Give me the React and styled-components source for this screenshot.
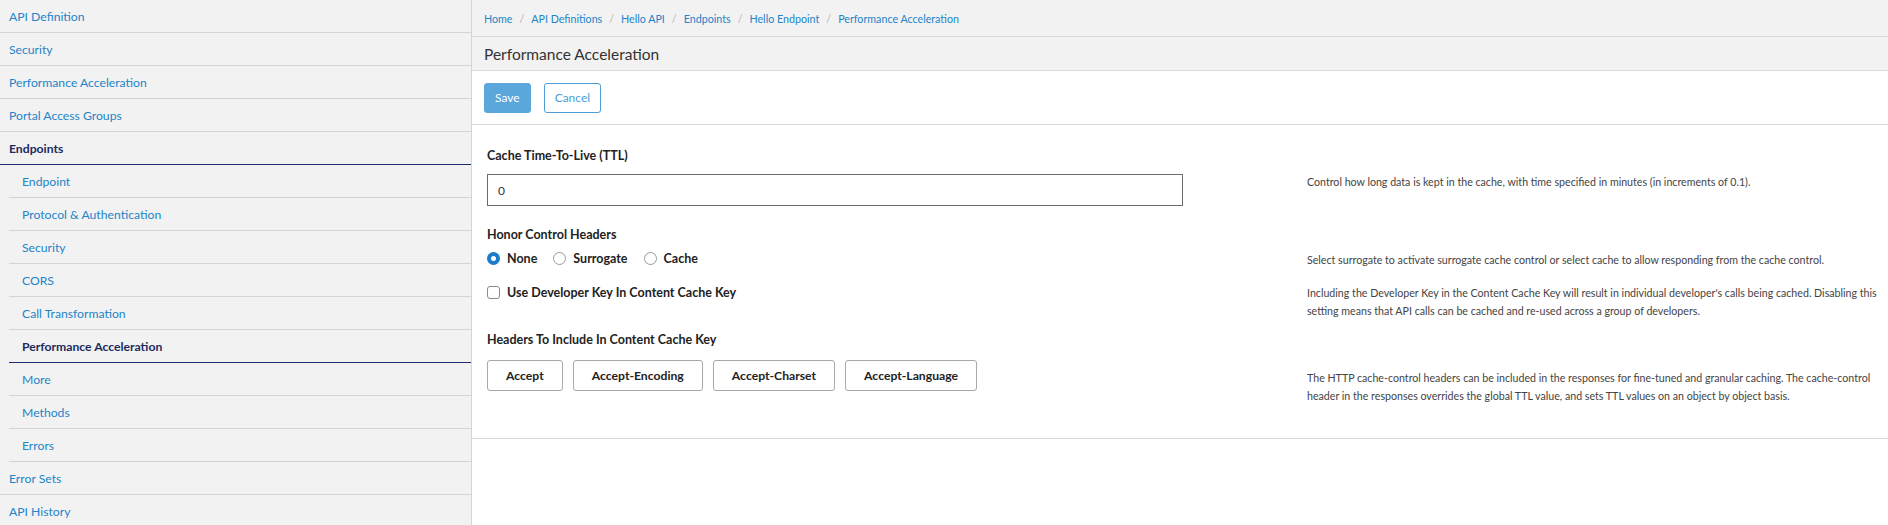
import React, { useState } from "react";
import styled, { createGlobalStyle } from "styled-components";

const GlobalStyle = createGlobalStyle`
  html, body {
    margin: 0;
    padding: 0;
    background: #fff;
  }
  body {
    font-family: Lato, "Noto Sans", Arial, sans-serif;
    color: #333;
  }
`;

const navTop = [
  { label: "API Definition" },
  { label: "Security" },
  { label: "Performance Acceleration" },
  { label: "Portal Access Groups" },
];

const navSub = [
  "Endpoint",
  "Protocol & Authentication",
  "Security",
  "CORS",
  "Call Transformation",
  "Performance Acceleration",
  "More",
  "Methods",
  "Errors",
];

const crumbs = [
  "Home",
  "API Definitions",
  "Hello API",
  "Endpoints",
  "Hello Endpoint",
  "Performance Acceleration",
];

const headerKeys = ["Accept", "Accept-Encoding", "Accept-Charset", "Accept-Language"];

const App = () => {
  const [honor, setHonor] = useState("none");
  const [devKey, setDevKey] = useState(false);
  const [ttl, setTtl] = useState("0");

  return (
    <Page>
      <GlobalStyle />
      <Sidebar>
        {navTop.map((item) => (
          <NavItem key={item.label}>{item.label}</NavItem>
        ))}
        <NavItem $active>Endpoints</NavItem>
        <SubNav>
          {navSub.map((label) => (
            <SubItem key={label} $active={label === "Performance Acceleration"}>
              {label}
            </SubItem>
          ))}
        </SubNav>
        <NavItem>Error Sets</NavItem>
        <NavItem>API History</NavItem>
      </Sidebar>

      <Main>
        <Breadcrumbs>
          {crumbs.map((c, i) => (
            <React.Fragment key={c}>
              {i > 0 && <Sep>/</Sep>}
              <Crumb>{c}</Crumb>
            </React.Fragment>
          ))}
        </Breadcrumbs>
        <TitleBar>Performance Acceleration</TitleBar>
        <Actions>
          <SaveBtn>Save</SaveBtn>
          <CancelBtn>Cancel</CancelBtn>
        </Actions>

        <Form>
          <Row $gap={20}>
            <Field>
              <Label $gap={10}>Cache Time-To-Live (TTL)</Label>
              <TextInput value={ttl} onChange={(e) => setTtl(e.target.value)} />
            </Field>
            <Help $top={26}>
              Control how long data is kept in the cache, with time specified in minutes (in increments of 0.1).
            </Help>
          </Row>

          <Row $gap={15}>
            <Field>
              <Label $gap={7}>Honor Control Headers</Label>
              <RadioGroup>
                {[
                  ["none", "None"],
                  ["surrogate", "Surrogate"],
                  ["cache", "Cache"],
                ].map(([val, text]) => (
                  <Option key={val} onClick={() => setHonor(val)}>
                    <Radio $checked={honor === val} />
                    {text}
                  </Option>
                ))}
              </RadioGroup>
            </Field>
            <Help $top={25}>
              Select surrogate to activate surrogate cache control or select cache to allow responding from the cache control.
            </Help>
          </Row>

          <Row $gap={11}>
            <Field>
              <Option onClick={() => setDevKey(!devKey)}>
                <Checkbox $checked={devKey} />
                Use Developer Key In Content Cache Key
              </Option>
            </Field>
            <Help $top={0}>
              Including the Developer Key in the Content Cache Key will result in individual developer's calls being cached. Disabling this setting means that API calls can be cached and re-used across a group of developers.
            </Help>
          </Row>

          <Row $gap={0}>
            <Field>
              <Label $gap={12}>Headers To Include In Content Cache Key</Label>
              <KeyButtons>
                {headerKeys.map((k) => (
                  <KeyButton key={k}>{k}</KeyButton>
                ))}
              </KeyButtons>
            </Field>
            <Help $top={38}>
              The HTTP cache-control headers can be included in the responses for fine-tuned and granular caching. The cache-control header in the responses overrides the global TTL value, and sets TTL values on an object by object basis.
            </Help>
          </Row>
        </Form>
      </Main>
    </Page>
  );
};

const Page = styled.div`
  display: flex;
  height: 100vh;
  overflow: hidden;
`;

const Sidebar = styled.nav`
  width: 471px;
  flex-shrink: 0;
  background: #f2f2f2;
  border-right: 1px solid #d6d6d6;
  display: flex;
  flex-direction: column;
`;

const NavItem = styled.div`
  height: 32px;
  flex-shrink: 0;
  display: flex;
  align-items: center;
  padding-left: 9px;
  font-size: 12.2px;
  font-weight: ${(p) => (p.$active ? 700 : 400)};
  color: ${(p) => (p.$active ? "#1c2b5e" : "#2284c9")};
  border-bottom: 1px solid ${(p) => (p.$active ? "#1c2b6e" : "#d4d4d4")};
`;

const SubNav = styled.div`
  margin-left: 9px;
  display: flex;
  flex-direction: column;
`;

const SubItem = styled(NavItem)`
  padding-left: 13px;
`;

const Main = styled.main`
  flex: 1;
  display: flex;
  flex-direction: column;
  min-width: 0;
`;

const Breadcrumbs = styled.div`
  height: 36px;
  background: #f2f2f2;
  border-bottom: 1px solid #d9d9d9;
  display: flex;
  align-items: center;
  padding-left: 12px;
  font-size: 10.7px;
`;

const Crumb = styled.span`
  color: #2284c9;
`;

const Sep = styled.span`
  color: #b5b5b5;
  margin: 0 7px;
`;

const TitleBar = styled.h1`
  margin: 0;
  height: 33px;
  background: #f2f2f2;
  border-bottom: 1px solid #d9d9d9;
  display: flex;
  align-items: center;
  padding-left: 12px;
  font-size: 15.5px;
  font-weight: 400;
  color: #333;
`;

const Actions = styled.div`
  height: 53px;
  border-bottom: 1px solid #d9d9d9;
  display: flex;
  align-items: center;
  gap: 13px;
  padding-left: 12px;
`;

const BaseBtn = styled.button`
  height: 30px;
  border-radius: 3px;
  font-family: inherit;
  font-size: 12px;
  padding: 0 10px;
  cursor: pointer;
`;

const SaveBtn = styled(BaseBtn)`
  min-width: 45px;
  background: #5ba7db;
  border: 1px solid #5ba7db;
  color: #fff;
`;

const CancelBtn = styled(BaseBtn)`
  min-width: 55px;
  background: #fff;
  border: 1px solid #4f9dd6;
  color: #4f9dd6;
`;

const Form = styled.section`
  border-bottom: 1px solid #d9d9d9;
  padding: 22px 0 33px 15px;
  display: flex;
  flex-direction: column;
`;

const Row = styled.div`
  display: grid;
  grid-template-columns: 820px 1fr;
  margin-bottom: ${(p) => p.$gap}px;
`;

const Field = styled.div`
  display: flex;
  flex-direction: column;
  align-items: flex-start;
`;

const Help = styled.p`
  margin: 0;
  padding-top: ${(p) => p.$top}px;
  padding-right: 10px;
  font-size: 10.65px;
  line-height: 18px;
  color: #444;
`;

const Label = styled.label`
  font-size: 12.5px;
  font-weight: 700;
  color: #222;
  line-height: 17px;
  margin-bottom: ${(p) => p.$gap}px;
`;

const TextInput = styled.input`
  width: 696px;
  height: 32px;
  box-sizing: border-box;
  border: 1px solid #6b6b6b;
  border-radius: 0;
  padding: 0 10px;
  font-family: inherit;
  font-size: 12px;
  color: #333;
  outline: none;
`;

const RadioGroup = styled.div`
  display: flex;
  gap: 16px;
`;

const Option = styled.div`
  display: flex;
  align-items: center;
  gap: 7px;
  font-size: 12.5px;
  font-weight: 700;
  color: #222;
  cursor: pointer;
  line-height: 17px;
`;

const Radio = styled.span`
  width: 13px;
  height: 13px;
  box-sizing: border-box;
  border-radius: 50%;
  border: ${(p) => (p.$checked ? "4px solid #1b7bcb" : "1px solid #9a9a9a")};
  background: #fff;
`;

const Checkbox = styled.span`
  width: 13px;
  height: 13px;
  box-sizing: border-box;
  border-radius: 3px;
  border: 1px solid #8a8a8a;
  background: ${(p) => (p.$checked ? "#1b7bcb" : "#fff")};
`;

const KeyButtons = styled.div`
  display: flex;
  gap: 10px;
`;

const KeyButton = styled.button`
  height: 31px;
  padding: 0 18px;
  background: #fff;
  border: 1px solid #a8a8a8;
  border-radius: 3px;
  font-family: inherit;
  font-size: 12.2px;
  font-weight: 700;
  color: #222;
  cursor: pointer;
`;

export default App;
